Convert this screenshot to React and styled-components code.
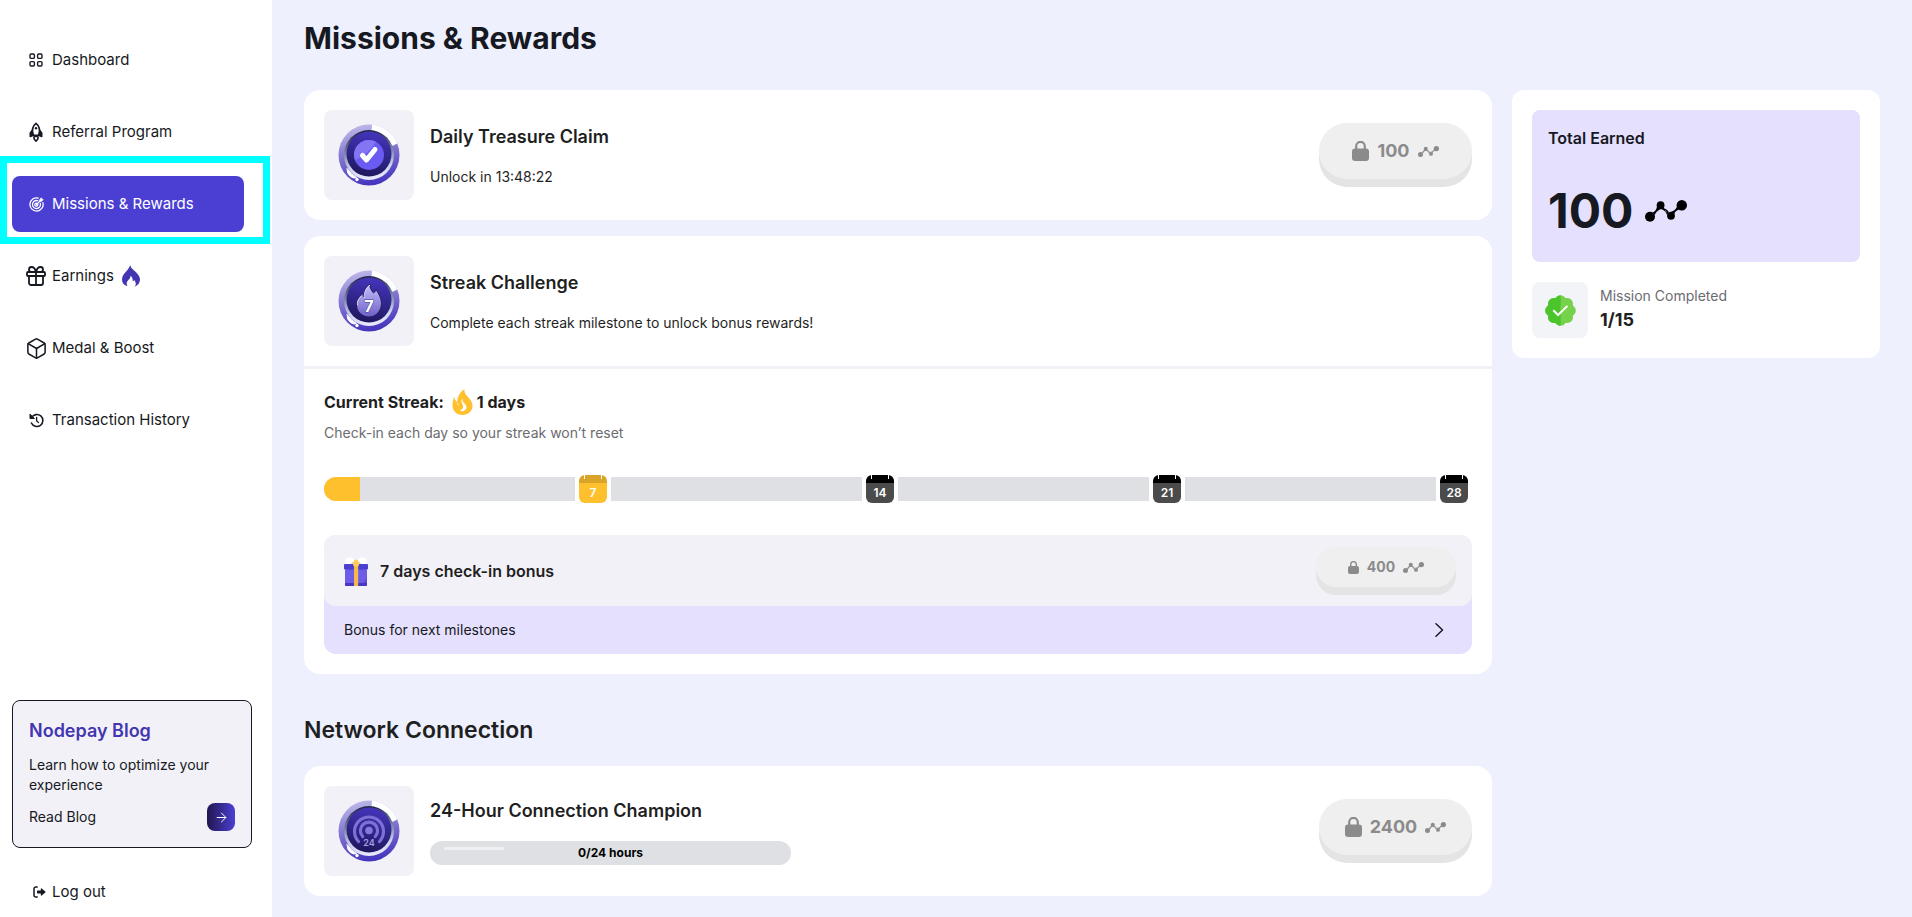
import React from "react";
import styled, { createGlobalStyle, css } from "styled-components";
import { Gift, Box, ArrowRight } from "lucide-react";

const GlobalStyle = createGlobalStyle`
  * {
    box-sizing: border-box;
  }
  body {
    margin: 0;
    background: #eef0fe;
    color: #1f1f1f;
    font-family: Inter, "Liberation Sans", sans-serif;
    font-size: 14px;
    line-height: 20px;
  }
  h1, h2, h3, p, ul {
    margin: 0;
    padding: 0;
  }
  button {
    font: inherit;
    color: inherit;
    border: 0;
    cursor: pointer;
  }
  a {
    color: inherit;
    text-decoration: none;
  }
  svg {
    flex: none;
  }
`;

const Layout = styled.div`
  display: flex;
  align-items: flex-start;
  min-height: 100vh;
`;

/* ---------- sidebar ---------- */

const Sidebar = styled.aside`
  position: sticky;
  top: 0;
  display: flex;
  flex-direction: column;
  flex: none;
  width: 272px;
  height: 100vh;
  padding: 32px 20px 5px 12px;
  background: #fff;
  color: #161922;
`;

const Nav = styled.nav`
  flex: 1;
  padding-right: 8px;
`;

const NavList = styled.ul`
  display: flex;
  flex-direction: column;
  gap: 16px;
  list-style: none;
`;

const NavItem = styled.li`
  position: relative;
`;

const navRow = css`
  display: flex;
  align-items: center;
  width: 100%;
  padding: 0 14px;
  gap: 6px;
  font-size: 15px;
  border-radius: 8px;
`;

const NavLink = styled.a`
  ${navRow}
  height: 56px;
  background: ${({ $active }) => ($active ? "#4b3fd3" : "transparent")};
  color: ${({ $active }) => ($active ? "#fff" : "inherit")};
`;

const NavIcon = styled.span`
  display: flex;
  align-items: center;
  justify-content: center;
  width: 20px;
  height: 24px;
`;

// Frame drawn around the highlighted menu entry
const Highlight = styled.span`
  position: absolute;
  inset: -20px -26px -12px -12px;
  border: 7px solid #00ffff;
  pointer-events: none;
`;

const BlogCard = styled.section`
  padding: 16px;
  border: 1px solid #161922;
  border-radius: 8px;
  background: #f2f1f7;
`;

const BlogTitle = styled.h3`
  color: #4336b0;
  font-size: 18px;
  font-weight: 600;
  line-height: 28px;
  margin-bottom: 10px;
`;

const BlogLink = styled.a`
  display: flex;
  align-items: center;
  justify-content: space-between;
  margin-top: 8px;
`;

const BlogArrow = styled.span`
  display: flex;
  align-items: center;
  justify-content: center;
  width: 28px;
  height: 28px;
  border-radius: 8px;
  background: linear-gradient(90deg, #20164f, #4b3fd3);
  color: #fff;
`;

const LogoutButton = styled.button`
  ${navRow}
  height: 40px;
  margin-top: 24px;
  background: none;

  ${NavIcon} {
    justify-content: flex-end;
    padding-right: 0;
  }
`;

/* ---------- main ---------- */

const Main = styled.main`
  flex: 1;
  min-width: 0;
  padding: 16px 32px 20px;
`;

const PageTitle = styled.h1`
  color: #161922;
  font-size: 30px;
  font-weight: 700;
  line-height: 44px;
  margin-bottom: 30px;
`;

const Columns = styled.div`
  display: grid;
  grid-template-columns: minmax(0, 1fr) 368px;
  gap: 20px;
  align-items: start;
`;

const SectionTitle = styled.h2`
  font-size: 23px;
  font-weight: 600;
  line-height: 32px;
  margin: 40px 0 20px;
`;

const Card = styled.section`
  border-radius: 16px;
  background: #fff;

  & + & {
    margin-top: 16px;
  }
`;

const MissionRow = styled.div`
  display: flex;
  align-items: center;
  gap: 16px;
  padding: 20px;
`;

const Thumb = styled.div`
  display: flex;
  align-items: center;
  justify-content: center;
  flex: none;
  width: 90px;
  height: 90px;
  border-radius: 8px;
  background: #f2f1f7;
`;

const MissionText = styled.div`
  flex: 1;
  display: flex;
  flex-direction: column;
  gap: 16px;
`;

const MissionTitle = styled.h3`
  font-size: 18px;
  font-weight: 600;
  line-height: 28px;
`;

const ClaimButton = styled.button`
  display: flex;
  align-items: center;
  justify-content: center;
  gap: 8px;
  width: ${({ $small }) => ($small ? 140 : 153)}px;
  height: ${({ $small }) => ($small ? 40 : 56)}px;
  margin-bottom: 8px;
  padding: 0;
  border-radius: 28px;
  background: #efefef;
  box-shadow: 0 8px 0 #e4e4e4;
  color: #8b8b8b;
  font-size: ${({ $small }) => ($small ? 14 : 18)}px;
  font-weight: 700;
  cursor: not-allowed;
`;

const StreakBody = styled.div`
  padding: 20px;
  border-top: 3px solid #f2f1f7;
`;

const StreakTitle = styled.h3`
  display: flex;
  align-items: center;
  font-size: 16px;
  font-weight: 700;
  line-height: 26px;

  svg {
    margin: 0 4px 0 8px;
  }
`;

const Muted = styled.p`
  color: #6b6b70;
`;

const StreakHint = styled(Muted)`
  margin-top: 8px;
`;

const StreakTrack = styled.div`
  display: flex;
  margin: 32px 0;
`;

const StreakWeek = styled.div`
  flex: 1;
  display: flex;
  align-items: center;
  gap: 4px;
  padding-right: 4px;
`;

const WeekBar = styled.div`
  flex: 1;
  height: 24px;
  overflow: hidden;
  background: #dfe0e4;

  ${StreakWeek}:first-child & {
    border-radius: 12px 0 0 12px;
  }
`;

const WeekFill = styled.div`
  height: 100%;
  background: #ffc02e;
`;

const DayBadge = styled.div`
  width: 28px;
  height: 28px;
  padding-top: 8px;
  border-radius: 6px;
  color: #fff;
  font-size: 12px;
  font-weight: 600;
  text-align: center;
  background:
    linear-gradient(#fff, #fff) 5px 0 / 1px 4px no-repeat,
    linear-gradient(#fff, #fff) 22px 0 / 1px 4px no-repeat,
    ${({ $current }) =>
      $current
        ? "linear-gradient(#d9a428 8px, #ffc02e 8px)"
        : "linear-gradient(#000 8px, #4b4b4b 8px)"};
`;

const BonusBox = styled.div`
  border-radius: 12px;
  background: #e5e0fe;
`;

const BonusRow = styled.div`
  display: flex;
  align-items: center;
  gap: 12px;
  padding: 12px 16px 11px 20px;
  border-radius: 12px;
  background: #f2f1f7;
`;

const BonusTitle = styled.h3`
  flex: 1;
  font-size: 16px;
  font-weight: 600;
`;

const BonusToggle = styled.button`
  display: flex;
  align-items: center;
  justify-content: space-between;
  width: 100%;
  height: 48px;
  padding: 0 28px 0 20px;
  background: none;
  color: #161922;
`;

const HoursBar = styled.div`
  position: relative;
  max-width: 361px;
  border-radius: 12px;
  background: #dfe0e4;
  color: #000;
  font-size: 12px;
  font-weight: 700;
  line-height: 24px;
  text-align: center;
`;

const Shine = styled.span`
  position: absolute;
  top: 6px;
  left: 14px;
  width: 60px;
  height: 3px;
  border-radius: 2px;
  background: #f0f0f2;
`;

/* ---------- summary ---------- */

const Summary = styled.aside`
  padding: 20px;
  border-radius: 12px;
  background: #fff;
`;

const TotalBox = styled.div`
  padding: 16px;
  border-radius: 8px;
  background: #e5e0fe;
  color: #161922;
`;

const TotalLabel = styled.h2`
  font-size: 16px;
  font-weight: 600;
  line-height: 24px;
`;

const TotalValue = styled.p`
  display: flex;
  align-items: center;
  gap: 12px;
  margin-top: 26px;
  font-size: 48px;
  font-weight: 700;
  line-height: 70px;
`;

const Completed = styled.div`
  display: flex;
  align-items: center;
  gap: 12px;
  margin-top: 20px;
`;

const CompletedIcon = styled.div`
  display: flex;
  align-items: center;
  justify-content: center;
  width: 56px;
  height: 56px;
  border-radius: 8px;
  background: #f3f4f8;
`;

const CompletedCount = styled.p`
  font-size: 18px;
  font-weight: 700;
  line-height: 28px;
`;

/* ---------- icons ---------- */

const DashboardIcon = () => (
  <svg width="14" height="14" viewBox="0 0 14 14" fill="none" stroke="currentColor" strokeWidth="1.4">
    <rect x="1" y="1" width="4.4" height="4.4" rx="1.2" />
    <rect x="8.6" y="1" width="4.4" height="4.4" rx="1.2" />
    <rect x="1" y="8.6" width="4.4" height="4.4" rx="1.2" />
    <rect x="8.6" y="8.6" width="4.4" height="4.4" rx="1.2" />
  </svg>
);

const RocketIcon = () => (
  <svg width="14" height="20" viewBox="0 0 14 20" fill="none" stroke="currentColor" strokeWidth="1.6">
    <path d="M3.8 13.2C2.8 8.5 3.4 4 7 1.3c3.6 2.7 4.2 7.2 3.2 11.900z" strokeLinejoin="round" />
    <circle cx="7" cy="6.200" r="1.200" fill="currentColor" stroke="none" />
    <path d="M3.200 8.500 1.300 11v3.500l3-1.300zM10.800 8.500l1.900 2.500v3.500l-3-1.300z" fill="currentColor" strokeLinejoin="round" />
    <path d="M5 15c-.6 1.800.6 3 2 4.200C8.400 18 9.600 16.800 9 15c-.6-1-3.400-1-4 0z" />
  </svg>
);

const TargetIcon = () => (
  <svg width="15" height="15" viewBox="0 0 15 15" fill="none" stroke="currentColor" strokeWidth="1.3" strokeLinecap="round">
    <path d="M9.300 1.100a6.600 6.600 0 1 0 4.600 4.600" />
    <path d="M8.700 3.700a4 4 0 1 0 2.600 2.600" />
    <path d="M7.900 6.300a1.500 1.500 0 1 0 .8.800" />
    <path d="M7.500 7.500 11 4" />
    <path d="M10.800 4.200V2.400L12.400.8l.4 1.400 1.400.4-1.600 1.600z" fill="currentColor" strokeLinejoin="round" strokeWidth=".8" />
  </svg>
);

const HistoryIcon = () => (
  <svg width="15" height="15" viewBox="0 0 15 15" fill="none" stroke="currentColor" strokeLinecap="round">
    <path d="M2.600 4.600a6 6 0 1 1-.2 5.400" strokeWidth="1.600" />
    <path d="M1 1.500v4h4z" fill="currentColor" strokeWidth="1" strokeLinejoin="round" />
    <path d="M7.600 4.500v3.200l1.900 1.900" strokeWidth="1.300" />
  </svg>
);

const LogoutIcon = () => (
  <svg width="13" height="12" viewBox="0 0 13 12" fill="none">
    <path d="M4.200 1H2.800A1.800 1.800 0 0 0 1 2.800v6.400A1.800 1.800 0 0 0 2.800 11h1.400" stroke="currentColor" strokeWidth="1.500" strokeLinecap="round" />
    <path d="M4.600 4.600h3.200V2.900c0-.5.500-.700.900-.4l3.600 3c.3.300.3.700 0 1l-3.600 3c-.4.300-.9.100-.9-.4V7.400H4.600a.6.600 0 0 1-.6-.6V5.200c0-.3.300-.6.600-.6z" fill="currentColor" />
  </svg>
);

const EarningsFlame = () => (
  <svg width="18" height="22" viewBox="0 0 18 22">
    <path
      d="M8.200 0c.4 3.200 3.200 4.600 5.800 7.200 2.200 2.300 4 4.300 4 7.400 0 3.300-2 6-5.600 7.400.9-1 1.400-2 1.400-3.300 0-1.700-.8-2.700-1.700-3.800-.4 .8-.8 1.200-1.400 1.400.2-2.500-.5-4.500-2.200-5.600 0 2-.7 3-1.900 4.100-1.200 1.200-1.900 2.200-1.900 3.700 0 1 .3 1.900.8 2.700C2.200 20.200 0 18 0 14.400c0-2.900 1.400-4.700 3.300-6.900C5.300 5.200 7.400 3 8.200 0z"
      fill="#4336b0"
    />
  </svg>
);

const StreakFlame = () => (
  <svg width="21" height="26" viewBox="0 0 20 26">
    <path
      d="M12 0c-.6 3 1 5.400 3.400 8C18 11 20 13 20 16.800 20 22 15.700 26 10 26S0 22 0 16.500c0-3 .6-6 1.800-8.500.6 2.500 1.400 4 3 5C4.800 8 7.500 3 12 0z"
      fill="#ffc02e"
    />
    <path
      d="M9.800 9.500c-.2 2.500.8 3.500 2.200 5 1.200 1.200 2 2.300 2 3.800 0 2.400-1.800 3.900-4 3.900-1.200 0-2.200-.4-2.900-1.100 2.300-.2 3.500-1.400 3.500-3.300 0-1.800-1.200-3-1.600-4.700-.3-1.300 0-2.500.8-3.600z"
      fill="#fff"
    />
    <path d="M4.800 13c.1 1.600.9 2.600 2.400 3.200-1.900.2-3-.8-2.400-3.200z" fill="#fff" />
  </svg>
);

const NodeIcon = ({ width = 21 }) => (
  <svg width={width} viewBox="0 0 42 22" fill="currentColor" aria-hidden="true">
    <circle cx="5" cy="16.800" r="5" />
    <circle cx="15.600" cy="5.200" r="3.900" />
    <circle cx="26" cy="15.800" r="3.900" />
    <circle cx="36.800" cy="5.200" r="5.200" />
    <path d="M7.500 12.500Q11 11.500 12 6.500l6 2Q12 9.500 9.700 15zM18.900 7q.5 4.500 4 6.500l-.8 1.500Q20 9.500 15 9zM18 8q4.500 1 6 4.500L22.500 14Q21.500 10 17 8.500z" />
    <path d="M29.300 14q.8-3.500 5-4.500l-2.200-3Q30 11.500 24 12.200z" />
  </svg>
);

const TotalIcon = styled.span`
  display: flex;
  color: #000;
`;

const LockIcon = ({ width = 17, height = 20 }) => (
  <svg width={width} height={height} viewBox="0 0 17 20" aria-hidden="true">
    <path d="M4.200 9V5.200a4.300 4.300 0 0 1 8.600 0V9" fill="none" stroke="currentColor" strokeWidth="2.200" />
    <rect y="7.500" width="17" height="12.500" rx="3" fill="currentColor" />
  </svg>
);

const ChevronIcon = () => (
  <svg width="9" height="14" viewBox="0 0 9 14" fill="none" stroke="currentColor" strokeWidth="1.500">
    <path d="m1 .8 6.500 6.200L1 13.200" strokeLinecap="round" strokeLinejoin="round" />
  </svg>
);

const lobes = [0, 45, 90, 135, 180, 225, 270, 315];

const VerifiedIcon = () => (
  <svg width="31" height="31" viewBox="-15.500 -15.500 31 31">
    <clipPath id="leftHalf">
      <rect x="-16" y="-16" width="16" height="32" />
    </clipPath>
    <g fill="#76d14c">
      {lobes.map((angle) => (
        <circle key={angle} cy="-9.900" r="5.400" transform={`rotate(${angle})`} />
      ))}
      <circle r="13.600" />
    </g>
    <g clipPath="url(#leftHalf)" fill="#4cc42c">
      {lobes.map((angle) => (
        <circle key={angle} cy="-9.900" r="5.400" transform={`rotate(${angle})`} />
      ))}
      <circle r="13.600" />
    </g>
    <path d="m-7.200-.2 4.700 4.700L7-4.600" fill="none" stroke="#fff" strokeWidth="2" />
  </svg>
);

const GiftBoxIcon = () => (
  <svg width="24" height="29" viewBox="0 0 24 29">
    <path d="M12 7C9 8 3 8 1.600 5.500.6 2.500 3 0 6 .2 9 .5 11.500 3.500 12 7zM12 7c3 1 9 1 10.400-1.500C23.400 2.500 21 0 18 .2c-3 .3-5.500 3.300-6 6.800z" fill="#fff" />
    <path d="M7 6.500c1-1.500 3-2 5 .5 2-2.500 4-2 5-.5z" fill="#d8b98c" />
    <rect x="1" y="12" width="22" height="17" rx="1" fill="#6c5ce8" />
    <path d="M1 26h22v2a1 1 0 0 1-1 1H2a1 1 0 0 1-1-1z" fill="#4637bd" />
    <path d="M18 26c3 0 4-3 4.500-8v8z" fill="#5546cf" />
    <rect y="7" width="24" height="5.500" rx="1" fill="#4b3fd0" />
    <rect x="10" y="8" width="4.200" height="21" fill="#f7b84a" />
    <path d="M10 3.500 12 2.500l2.200 1 .8 5-3 1.500-3-1.500z" fill="#ffcb52" />
  </svg>
);

const Medal = ({ id, children }) => (
  <svg width="62" height="62" viewBox="0 0 62 62">
    <defs>
      <linearGradient id={`${id}-ring`} x1=".3" y1="0" x2=".5" y2="1">
        <stop offset="0" stopColor="#c0b9ea" />
        <stop offset=".5" stopColor="#7f72cf" />
        <stop offset="1" stopColor="#4334bd" />
      </linearGradient>
      <linearGradient id={`${id}-groove`} x1=".4" y1="0" x2=".5" y2="1">
        <stop offset="0" stopColor="#1d2340" />
        <stop offset=".4" stopColor="#75809f" />
        <stop offset=".75" stopColor="#cfd3ee" />
        <stop offset="1" stopColor="#eceaff" />
      </linearGradient>
      <linearGradient id={`${id}-core`} x1=".6" y1="0" x2=".4" y2="1">
        <stop offset="0" stopColor="#4435bd" />
        <stop offset="1" stopColor="#1e175c" />
      </linearGradient>
      <linearGradient id={`${id}-glyph`} x1="0" y1="0" x2="0" y2="1">
        <stop offset="0" stopColor="#c9c2ff" />
        <stop offset="1" stopColor="#6b5fc4" />
      </linearGradient>
    </defs>
    <circle cx="31" cy="31" r="30.500" fill={`url(#${id}-ring)`} />
    <path d="M34 .6A30.500 30.500 0 0 1 59.300 19.500L52 23A23 23 0 0 0 33.500 7z" fill="#fff" />
    <circle cx="31" cy="31" r="25" fill={`url(#${id}-groove)`} />
    <circle cx="31" cy="30" r="22.500" fill={`url(#${id}-core)`} />
    <path d="M9 44.500q4 6 9.500 9-2.500 1.500-6-1T9 44.500z" fill="#fff" stroke="#fff" strokeLinejoin="round" />
    <circle cx="19" cy="55.500" r="1.700" fill="#fff" />
    {children}
  </svg>
);

const CheckMedal = () => (
  <Medal id="daily">
    <circle cx="31" cy="31" r="15" fill="#6a5bf2" />
    <path d="M16 31a15 15 0 0 1 22-13.300C33 26 26 32 17 36a15 15 0 0 1-1-5z" fill="#8276f5" />
    <path d="m24.500 31.500 4 4.500 8.500-10.500" fill="none" stroke="#fff" strokeWidth="5" strokeLinecap="round" strokeLinejoin="round" />
  </Medal>
);

const FlameMedal = () => (
  <Medal id="streak">
    <path
      d="M32 14c-.5 3.500 1 6 3.500 9 1.500-1 2.200-2 2.500-3.500 3 4.500 5.500 9 5.500 14C43.500 41 38 47 31 47s-12.500-5.500-12.500-12c0-5 2.500-8 6-11 .3 2 1 3 2 3.500C25.500 21 27.500 17 32 14z"
      fill="url(#streak-glyph)"
      stroke="#221a63"
      strokeWidth="1"
    />
    <path d="M32 15c-4 3-6.500 8-5.500 13M24.500 25c-3.500 3-5.500 6-5 10" fill="none" stroke="#e1ddff" strokeWidth="1" />
    <text x="31" y="42" textAnchor="middle" fontSize="16" fontWeight="700" fill="#fff" stroke="#4a3f9c" strokeWidth="1" paintOrder="stroke">
      7
    </text>
  </Medal>
);

const SignalMedal = () => (
  <Medal id="signal">
    <g fill="none" stroke="#7d70d6" strokeWidth="3.200" strokeLinecap="round">
      <path d="M20.500 41.500a14.500 14.500 0 1 1 21 0" />
      <path d="M24.700 36.500a8.600 8.600 0 1 1 12.600 0" />
    </g>
    <circle cx="31" cy="30.500" r="3.800" fill="#8578dc" />
    <text x="31" y="46" textAnchor="middle" fontSize="9" fontWeight="600" fill="#a79fe6">
      24
    </text>
  </Medal>
);

const links = [
  { title: "Dashboard", icon: <DashboardIcon /> },
  { title: "Referral Program", icon: <RocketIcon /> },
  { title: "Missions & Rewards", icon: <TargetIcon />, active: true },
  { title: "Earnings", icon: <Gift size={24} strokeWidth={1.8} />, hot: true },
  { title: "Medal & Boost", icon: <Box size={23} strokeWidth={1.6} /> },
  { title: "Transaction History", icon: <HistoryIcon /> },
];

const HotIcon = styled.span`
  display: flex;
  margin-left: 2px;
`;

const weeks = [
  { day: 7, progress: 1 / 7, current: true },
  { day: 14, progress: 0 },
  { day: 21, progress: 0 },
  { day: 28, progress: 0 },
];

function Claim({ amount, small }) {
  return (
    <ClaimButton type="button" disabled $small={small}>
      {small ? <LockIcon width={11} height={13} /> : <LockIcon />}
      {amount}
      <NodeIcon />
    </ClaimButton>
  );
}

function SideMenu() {
  return (
    <Sidebar>
      <Nav>
        <NavList>
          {links.map(({ title, icon, active, hot }) => (
            <NavItem key={title}>
              <NavLink href="#" $active={active} aria-current={active ? "page" : undefined}>
                <NavIcon>{icon}</NavIcon>
                {title}
                {hot && (
                  <HotIcon>
                    <EarningsFlame />
                  </HotIcon>
                )}
              </NavLink>
              {active && <Highlight />}
            </NavItem>
          ))}
        </NavList>
      </Nav>
      <BlogCard>
        <BlogTitle>Nodepay Blog</BlogTitle>
        <p>Learn how to optimize your experience</p>
        <BlogLink href="#">
          Read Blog
          <BlogArrow>
            <ArrowRight size={15} strokeWidth={1.6} />
          </BlogArrow>
        </BlogLink>
      </BlogCard>
      <LogoutButton type="button">
        <NavIcon>
          <LogoutIcon />
        </NavIcon>
        Log out
      </LogoutButton>
    </Sidebar>
  );
}

function StreakCard() {
  return (
    <Card>
      <MissionRow>
        <Thumb>
          <FlameMedal />
        </Thumb>
        <MissionText>
          <MissionTitle>Streak Challenge</MissionTitle>
          <p>Complete each streak milestone to unlock bonus rewards!</p>
        </MissionText>
      </MissionRow>
      <StreakBody>
        <StreakTitle>
          Current Streak: <StreakFlame /> 1 days
        </StreakTitle>
        <StreakHint>Check-in each day so your streak won’t reset</StreakHint>
        <StreakTrack>
          {weeks.map(({ day, progress, current }) => (
            <StreakWeek key={day}>
              <WeekBar>
                <WeekFill style={{ width: `${progress * 100}%` }} />
              </WeekBar>
              <DayBadge $current={current}>{day}</DayBadge>
            </StreakWeek>
          ))}
        </StreakTrack>
        <BonusBox>
          <BonusRow>
            <GiftBoxIcon />
            <BonusTitle>7 days check-in bonus</BonusTitle>
            <Claim amount={400} small />
          </BonusRow>
          <BonusToggle type="button">
            Bonus for next milestones
            <ChevronIcon />
          </BonusToggle>
        </BonusBox>
      </StreakBody>
    </Card>
  );
}

export default function App() {
  return (
    <>
      <GlobalStyle />
      <Layout>
        <SideMenu />
        <Main>
          <PageTitle>Missions &amp; Rewards</PageTitle>
          <Columns>
            <div>
              <Card>
                <MissionRow>
                  <Thumb>
                    <CheckMedal />
                  </Thumb>
                  <MissionText>
                    <MissionTitle>Daily Treasure Claim</MissionTitle>
                    <p>Unlock in 13:48:22</p>
                  </MissionText>
                  <Claim amount={100} />
                </MissionRow>
              </Card>
              <StreakCard />
              <SectionTitle>Network Connection</SectionTitle>
              <Card>
                <MissionRow>
                  <Thumb>
                    <SignalMedal />
                  </Thumb>
                  <MissionText>
                    <MissionTitle>24-Hour Connection Champion</MissionTitle>
                    <HoursBar role="progressbar" aria-valuemin={0} aria-valuemax={24} aria-valuenow={0}>
                      <Shine />
                      0/24 hours
                    </HoursBar>
                  </MissionText>
                  <Claim amount={2400} />
                </MissionRow>
              </Card>
            </div>
            <Summary>
              <TotalBox>
                <TotalLabel>Total Earned</TotalLabel>
                <TotalValue>
                  100
                  <TotalIcon>
                    <NodeIcon width={42} />
                  </TotalIcon>
                </TotalValue>
              </TotalBox>
              <Completed>
                <CompletedIcon>
                  <VerifiedIcon />
                </CompletedIcon>
                <div>
                  <Muted>Mission Completed</Muted>
                  <CompletedCount>1/15</CompletedCount>
                </div>
              </Completed>
            </Summary>
          </Columns>
        </Main>
      </Layout>
    </>
  );
}
